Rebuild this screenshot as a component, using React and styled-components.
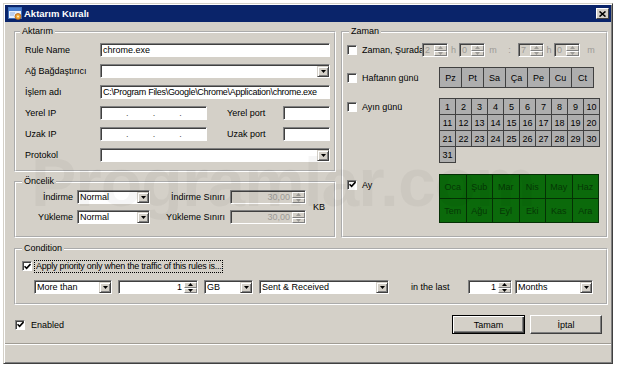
import React from "react";
import styled, { createGlobalStyle } from "styled-components";

const GlobalStyle = createGlobalStyle`
  html, body { margin: 0; padding: 0; background: #fff; }
  body {
    font-family: "Liberation Sans", Arial, sans-serif;
    font-size: 9px;
    color: #000;
  }
`;

const Window = styled.div`
  position: relative;
  box-sizing: border-box;
  width: 610px;
  height: 361px;
  margin: 3px 0 0 3px;
  padding: 1px;
  border: 1px solid;
  border-color: #d4d0c8 #404040 #404040 #d4d0c8;
  box-shadow: inset 1px 1px #fff, inset -1px -1px #808080;
  background: #d4d0c8;
  display: flex;
  flex-direction: column;
  overflow: hidden;
`;

const TitleBar = styled.div`
  flex: none;
  height: 17px;
  background: #0a246a;
  display: flex;
  align-items: center;
  padding: 0 2px 0 3px;
  color: #fff;
  font-size: 9.5px;
  font-weight: bold;
`;

const Title = styled.span`
  flex: 1;
  margin-left: 2px;
`;

const CloseButton = styled.div`
  box-sizing: border-box;
  width: 13px;
  height: 11px;
  background: #d4d0c8;
  border: 1px solid;
  border-color: #fff #404040 #404040 #fff;
  display: flex;
  align-items: center;
  justify-content: center;
`;

const Body = styled.div`
  flex: 1;
  display: flex;
  flex-direction: column;
`;

const Content = styled.div`
  padding: 4px 3px 0 9px;
  display: flex;
  flex-direction: column;
`;

const TopGrid = styled.div`
  display: grid;
  grid-template-columns: 322px 267px;
  column-gap: 5px;
`;

const LeftCol = styled.div`
  display: flex;
  flex-direction: column;
  gap: 4px;
`;

const Group = styled.fieldset`
  margin: ${p => p.$mt || 0}px 0 0 0;
  min-width: 0;
  border: 2px groove #fff;
  padding: ${p => p.$pad};
  display: flex;
  flex-direction: column;
  gap: ${p => p.$gap || 0}px;
`;

const Legend = styled.legend`
  padding: 0 2px;
  margin-left: ${p => p.$lx || 0}px;
  font-size: 9px;
  line-height: 11px;
`;

const Row = styled.div`
  display: flex;
  align-items: center;
  height: ${p => p.$h || 14}px;
  gap: ${p => p.$gap || 0}px;
  margin-left: ${p => p.$ml || 0}px;
`;

const Label = styled.span`
  flex: none;
  width: ${p => p.$w}px;
  margin-left: ${p => p.$ml || 0}px;
  text-align: ${p => (p.$right ? "right" : "left")};
  padding-right: ${p => p.$pr || 0}px;
  box-sizing: border-box;
  white-space: nowrap;
`;

const Sunken = styled.div`
  box-sizing: border-box;
  height: 14px;
  width: ${p => (p.$w ? `${p.$w}px` : "auto")};
  flex: ${p => (p.$w ? "none" : 1)};
  margin-left: ${p => p.$ml || 0}px;
  padding: 1px 0 0 1px;
  background: ${p => (p.$off ? "#d4d0c8" : "#fff")};
  color: ${p => (p.$off ? "#9c9a96" : "#000")};
  border: 1px solid;
  border-color: #808080 #fff #fff #808080;
  box-shadow: inset 1px 1px #404040;
  display: flex;
  align-items: stretch;
  overflow: hidden;
  white-space: nowrap;
`;

const FieldText = styled.span`
  flex: 1;
  min-width: 0;
  padding: 0 2px 0 1px;
  line-height: 11px;
  letter-spacing: ${p => p.$tight ? "-0.3px" : "normal"};
  text-align: ${p => p.$align || "left"};
  overflow: hidden;
`;

const DropButton = styled.div`
  box-sizing: border-box;
  flex: none;
  width: 12px;
  background: #d4d0c8;
  border: 1px solid;
  border-color: #d4d0c8 #404040 #404040 #d4d0c8;
  box-shadow: inset 1px 1px #fff, inset -1px -1px #808080;
  display: flex;
  align-items: center;
  justify-content: center;
`;

const SpinButtons = styled.div`
  flex: none;
  width: 13px;
  display: flex;
  flex-direction: column;
`;

const SpinHalf = styled.div`
  flex: 1;
  box-sizing: border-box;
  background: #d4d0c8;
  border: 1px solid;
  border-color: #fff #808080 #808080 #fff;
  display: flex;
  align-items: center;
  justify-content: center;
`;

const IpDots = styled.div`
  flex: 1;
  display: grid;
  grid-template-columns: 1fr auto 1fr auto 1fr auto 1fr;
  line-height: 11px;
  color: #505050;
`;

const CheckBox = styled.span`
  box-sizing: border-box;
  flex: none;
  width: 10px;
  height: 10px;
  background: #fff;
  border: 1px solid;
  border-color: #808080 #fff #fff #808080;
  box-shadow: inset 1px 1px #404040;
  display: flex;
  align-items: center;
  justify-content: center;
`;

const FocusLabel = styled.span`
  outline: 1px dotted #000;
  padding: 0 1px;
  line-height: 11px;
  letter-spacing: -0.25px;
`;

const Unit = styled.span`
  flex: none;
  width: ${p => p.$w}px;
  text-align: center;
  color: #9c9a96;
`;

const ZamanRow = styled.div`
  display: grid;
  grid-template-columns: 92px auto;
  align-items: start;
  margin-top: ${p => p.$mt}px;
`;

const ZamanLabel = styled.div`
  height: ${p => p.$h}px;
  display: flex;
  align-items: center;
  gap: 5px;
`;

const DayStrip = styled.div`
  display: grid;
  grid-template-columns: repeat(7, 22px);
  width: max-content;
  border-top: 1px solid #404040;
  border-left: 1px solid #404040;
`;

const DateGrid = styled.div`
  display: grid;
  grid-template-columns: repeat(10, 16px);
  grid-auto-rows: 16px;
  width: max-content;
  border-top: 1px solid #404040;
  border-left: 1px solid #404040;
`;

const MonthGrid = styled.div`
  display: grid;
  grid-template-columns: repeat(6, 26.5px);
  grid-auto-rows: 24px;
  width: max-content;
  border-top: 1px solid #043004;
  border-left: 1px solid #043004;
`;

const Cell = styled.div`
  box-sizing: border-box;
  height: ${p => p.$h || 16}px;
  background: ${p => p.$bg || "#aeaeae"};
  color: ${p => p.$fg || "#000"};
  border-right: 1px solid ${p => p.$line || "#404040"};
  border-bottom: 1px solid ${p => p.$line || "#404040"};
  display: flex;
  align-items: center;
  justify-content: center;
`;

const PriorityGrid = styled.div`
  display: grid;
  grid-template-columns: 61px 73px 80px 76px auto;
  grid-template-rows: 14px 14px;
  row-gap: 6px;
  align-items: center;
`;

const Kb = styled.span`
  grid-column: 5;
  grid-row: 1 / span 2;
  margin-left: 7px;
`;

const Footer = styled.div`
  margin-top: 10px;
  height: 19px;
  display: flex;
  align-items: center;
  gap: 5px;
  padding: 0 6px 0 1px;
`;

const Enabled = styled.div`
  flex: 1;
  display: flex;
  align-items: center;
  gap: 6px;
`;

const Button = styled.div`
  box-sizing: border-box;
  width: ${p => p.$w}px;
  height: 19px;
  background: #d4d0c8;
  border: 1px solid;
  border-color: ${p => (p.$default ? "#000" : "#fff #404040 #404040 #fff")};
  box-shadow: ${p =>
    p.$default
      ? "inset 1px 1px #fff, inset -1px -1px #404040, inset -2px -2px #808080"
      : "inset -1px -1px #808080"};
  display: flex;
  align-items: center;
  justify-content: center;
`;

const StatusBar = styled.div`
  flex: 1;
  margin-top: 9px;
  border-top: 1px solid #a09c94;
  box-shadow: inset 0 1px #fff;
`;

const Watermark = styled.div`
  position: absolute;
  left: 27px;
  top: 144px;
  font-size: 68px;
  font-weight: bold;
  line-height: 1;
  letter-spacing: -1px;
  color: rgba(0, 0, 0, 0.035);
  white-space: nowrap;
  pointer-events: none;
`;

const Arrow = ({ up, color = "#000" }) => (
  <svg width="5" height="3" viewBox="0 0 5 3">
    <polygon points={up ? "0,3 5,3 2.5,0" : "0,0 5,0 2.5,3"} fill={color} />
  </svg>
);

const Check = ({ on }) => (
  <CheckBox>
    {on && (
      <svg width="7" height="7" viewBox="0 0 7 7">
        <path d="M0.5 3.2 L2.6 5.3 L6.5 1" stroke="#000" strokeWidth="1.6" fill="none" />
      </svg>
    )}
  </CheckBox>
);

const Select = ({ w, ml, children }) => (
  <Sunken $w={w} $ml={ml}>
    <FieldText>{children}</FieldText>
    <DropButton>
      <Arrow />
    </DropButton>
  </Sunken>
);

const Spin = ({ w, value, off, align = "right" }) => (
  <Sunken $w={w} $off={off}>
    <FieldText $align={align}>{value}</FieldText>
    <SpinButtons>
      <SpinHalf>
        <Arrow up color={off ? "#9c9a96" : "#000"} />
      </SpinHalf>
      <SpinHalf>
        <Arrow color={off ? "#9c9a96" : "#000"} />
      </SpinHalf>
    </SpinButtons>
  </Sunken>
);

const IpField = () => (
  <Sunken $w={107}>
    <IpDots>
      <span />.<span />.<span />.<span />
    </IpDots>
  </Sunken>
);

const days = ["Pz", "Pt", "Sa", "Ça", "Pe", "Cu", "Ct"];
const months = ["Oca", "Şub", "Mar", "Nis", "May", "Haz", "Tem", "Ağu", "Eyl", "Eki", "Kas", "Ara"];
const dates = Array.from({ length: 31 }, (_, i) => i + 1);

export default function App() {
  return (
    <Window>
      <GlobalStyle />
      <TitleBar>
        <svg width="14" height="13" viewBox="0 0 14 13">
          <rect x="0.5" y="0.5" width="13" height="11" fill="#e8f0fc" stroke="#3f6fb8" />
          <rect x="1" y="1" width="12" height="3" fill="#4a7fd0" />
          <rect x="2" y="5.5" width="5" height="1" fill="#8fb0e0" />
          <rect x="2" y="7.5" width="4" height="1" fill="#8fb0e0" />
          <circle cx="10" cy="9.5" r="3" fill="#f2a530" stroke="#b0601a" strokeWidth="0.8" />
          <circle cx="10" cy="9.5" r="1" fill="#fff4c0" />
        </svg>
        <Title>Aktarım Kuralı</Title>
        <CloseButton>
          <svg width="7" height="6" viewBox="0 0 7 6">
            <path d="M0.5 0.5 L6.5 5.5 M6.5 0.5 L0.5 5.5" stroke="#000" strokeWidth="1.6" />
          </svg>
        </CloseButton>
      </TitleBar>

      <Body>
        <Content>
          <TopGrid>
            <LeftCol>
              <Group $pad="6px 4px 8px 9px" $gap={7}>
                <Legend $lx={-5}>Aktarım</Legend>
                <Row>
                  <Label $w={75}>Rule Name</Label>
                  <Sunken>
                    <FieldText>chrome.exe</FieldText>
                  </Sunken>
                </Row>
                <Row>
                  <Label $w={75}>Ağ Bağdaştırıcı</Label>
                  <Select />
                </Row>
                <Row>
                  <Label $w={75}>İşlem adı</Label>
                  <Sunken>
                    <FieldText $tight>C:\Program Files\Google\Chrome\Application\chrome.exe</FieldText>
                  </Sunken>
                </Row>
                <Row>
                  <Label $w={75}>Yerel IP</Label>
                  <IpField />
                  <Label $w={56} $ml={20}>Yerel port</Label>
                  <Sunken $w={47} />
                </Row>
                <Row>
                  <Label $w={75}>Uzak IP</Label>
                  <IpField />
                  <Label $w={56} $ml={20}>Uzak port</Label>
                  <Sunken $w={47} />
                </Row>
                <Row>
                  <Label $w={75}>Protokol</Label>
                  <Select />
                </Row>
              </Group>

              <Group $pad="3px 0 12px 0">
                <Legend $lx={6}>Öncelik</Legend>
                <PriorityGrid>
                  <Label $w={61} $right $pr={4}>İndirme</Label>
                  <Select w={73}>Normal</Select>
                  <Label $w={80} $right $pr={5}>İndirme Sınırı</Label>
                  <Spin w={76} value="30,00" off />
                  <Kb>KB</Kb>
                  <Label $w={61} $right $pr={4}>Yükleme</Label>
                  <Select w={73}>Normal</Select>
                  <Label $w={80} $right $pr={5}>Yükleme Sınırı</Label>
                  <Spin w={76} value="30,00" off />
                </PriorityGrid>
              </Group>
            </LeftCol>

            <Group $pad="6px 4px 0 4px">
              <Legend $lx={2}>Zaman</Legend>
              <Row>
                <Check />
                <Label $w={60} $ml={5}>Zaman, Şurada</Label>
                <Spin w={26} value="2" off align="left" />
                <Unit $w={11}>h</Unit>
                <Spin w={26} value="0" off align="left" />
                <Unit $w={16}>m</Unit>
                <Unit $w={17}>:</Unit>
                <Spin w={26} value="7" off align="left" />
                <Unit $w={10}>h</Unit>
                <Spin w={26} value="0" off align="left" />
                <Unit $w={22}>m</Unit>
              </Row>

              <ZamanRow $mt={10}>
                <ZamanLabel $h={21}>
                  <Check />
                  <span>Haftanın günü</span>
                </ZamanLabel>
                <DayStrip>
                  {days.map(d => (
                    <Cell key={d} $h={20}>
                      {d}
                    </Cell>
                  ))}
                </DayStrip>
              </ZamanRow>

              <ZamanRow $mt={10}>
                <ZamanLabel $h={18}>
                  <Check />
                  <span>Ayın günü</span>
                </ZamanLabel>
                <DateGrid>
                  {dates.map(n => (
                    <Cell key={n}>{n}</Cell>
                  ))}
                </DateGrid>
              </ZamanRow>

              <ZamanRow $mt={11}>
                <ZamanLabel $h={21}>
                  <Check on />
                  <span>Ay</span>
                </ZamanLabel>
                <MonthGrid>
                  {months.map(m => (
                    <Cell key={m} $h={24} $bg="#0b6a0b" $fg="#053805" $line="#043004">
                      {m}
                    </Cell>
                  ))}
                </MonthGrid>
              </ZamanRow>
            </Group>
          </TopGrid>

          <Group $mt={5} $pad="6px 6px 9px 6px" $gap={8}>
            <Legend $lx={0}>Condition</Legend>
            <Row $h={12} $gap={3}>
              <Check on />
              <FocusLabel>Apply priority only when the traffic of this rules is...</FocusLabel>
            </Row>
            <Row $gap={6} $ml={12}>
              <Select w={78}>More than</Select>
              <Spin w={80} value="1" />
              <Select w={49}>GB</Select>
              <Select w={130}>Sent &amp; Received</Select>
              <Label $w={51} $ml={16}>in the last</Label>
              <Spin w={44} value="1" />
              <Select w={78} ml={-3}>Months</Select>
            </Row>
          </Group>

          <Footer>
            <Enabled>
              <Check on />
              <span>Enabled</span>
            </Enabled>
            <Button $w={73} $default>Tamam</Button>
            <Button $w={72}>İptal</Button>
          </Footer>
        </Content>
        <StatusBar />
      </Body>

      <Watermark>Programlar.com</Watermark>
    </Window>
  );
}
